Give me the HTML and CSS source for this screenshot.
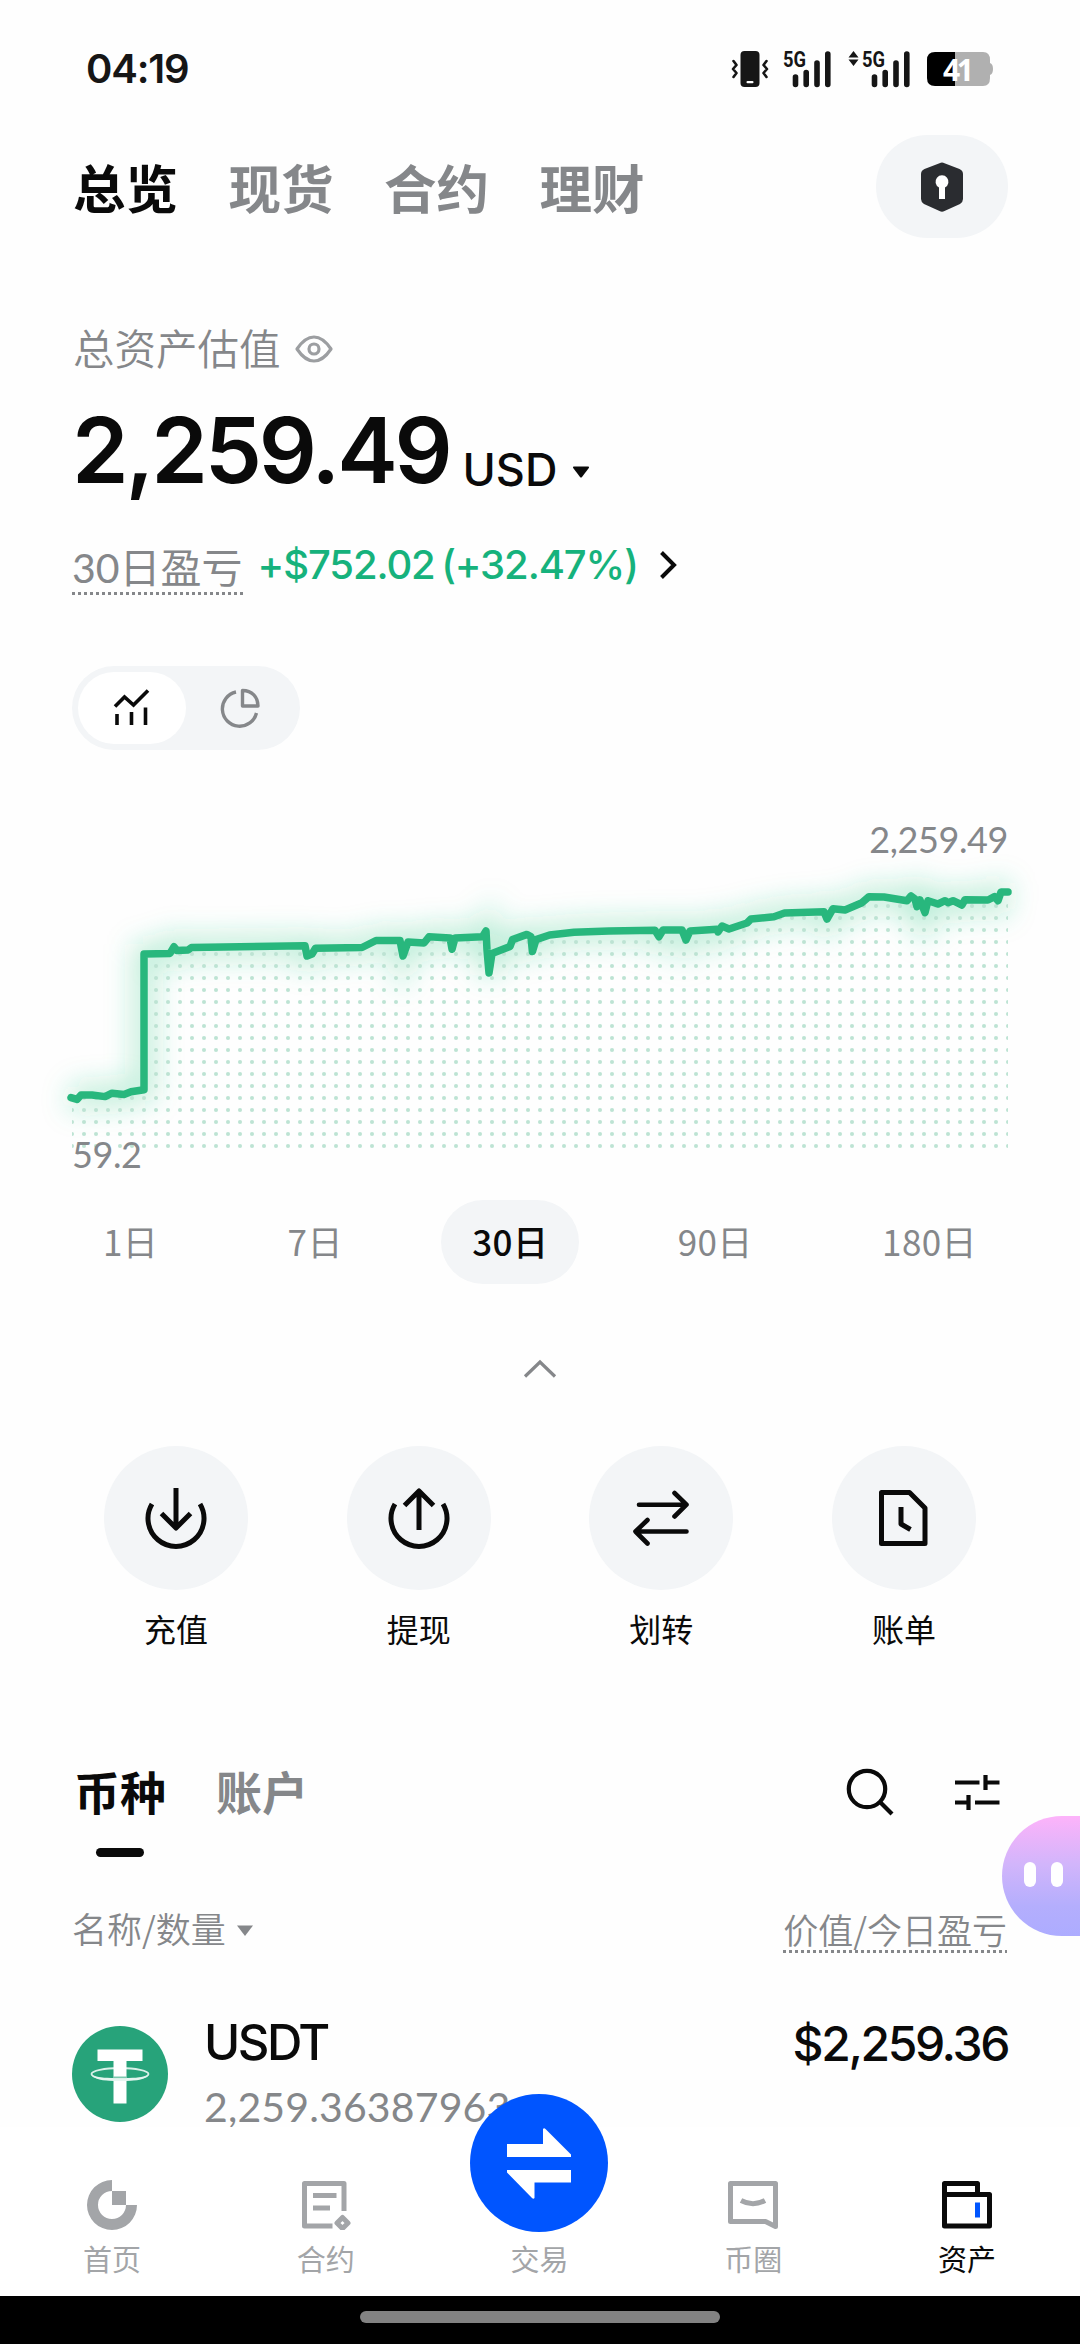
FILE: index.html
```html
<!DOCTYPE html>
<html lang="zh-CN">
<head>
<meta charset="utf-8">
<title>资产总览</title>
<link rel="stylesheet" href="styles.css">
</head>
<body>
<div class="app">
  <header class="status">
    <span class="clock">04:19</span>
    <div class="status-icons">
      <svg class="vibrate" viewBox="0 0 38 38" width="38" height="38">
        <rect x="9.500" y="1" width="19" height="36" rx="4" fill="#161616"/>
        <rect x="15.500" y="31" width="7" height="2.200" rx="1" fill="#fff"/>
        <path d="M2.500 11l3 4-3.500 4 3.500 4-3 4M35.500 11l-3 4 3.500 4-3.500 4 3 4" fill="none" stroke="#161616" stroke-width="2.600" stroke-linecap="round" stroke-linejoin="round"/>
      </svg>
      <svg class="signal" viewBox="-2 -8 54 54" width="54" height="54">
        <text class="net" x="0" y="16.500" textLength="23" lengthAdjust="spacingAndGlyphs">5G</text>
        <path d="M12.500 27v7.500M23.200 22.500v12M34 13v21.500M44.800 4v30.500" stroke="#161616" stroke-width="5.600" stroke-linecap="round"/>
      </svg>
      <svg class="signal-data" viewBox="-2 -8 66 54" width="66" height="54">
        <path d="M5.500 1l5 6.500h-10zM5.500 16l5-6.500h-10z" fill="#161616"/>
        <text class="net" x="14" y="16.500" textLength="23" lengthAdjust="spacingAndGlyphs">5G</text>
        <path d="M26.500 27v7.500M37.200 22.500v12M48 13v21.500M58.800 4v30.500" stroke="#161616" stroke-width="5.600" stroke-linecap="round"/>
      </svg>
      <svg class="battery" viewBox="0 -10 67 54" width="67" height="54">
        <path d="M8 0H56q7 0 7 8v3q3 1 3 6t-3 6v3q0 8-7 8H28V0z" fill="#b0b0b0"/>
        <path d="M28 0v34H8q-8 0-8-8V8q0-8 8-8z" fill="#000"/>
        <text class="charge" x="16" y="28.500" textLength="31">41</text>
      </svg>
    </div>
  </header>

  <nav class="top-tabs">
    <span class="top-tab active">总览</span>
    <span class="top-tab">现货</span>
    <span class="top-tab">合约</span>
    <span class="top-tab">理财</span>
    <span class="safe">
      <svg viewBox="0 0 42 50" width="42" height="50">
        <path d="M18.500 1.200q2.500-1.200 5 0L38.500 7q3.500 1.600 3.500 5v25q0 3-3 5L23.500 49q-2.500 1.400-5 0L3 42q-3-2-3-5V12q0-3.400 3.500-5z" fill="#2a2c30"/>
        <path d="M24 25.500V37h-6V25.500a6.500 6.500 0 1 1 6 0z" fill="#fff"/>
      </svg>
    </span>
  </nav>

  <main class="content">
    <div class="asset-label">总资产估值
      <svg viewBox="0 0 38 28" width="38" height="28" fill="none" stroke="#9c9ea1" stroke-width="3.200">
        <path d="M2 14Q10 2 19 2t17 12q-8 12-17 12T2 14z" stroke-linejoin="round"/><circle cx="19" cy="14" r="5"/>
      </svg>
    </div>
    <div class="amount">
      <span class="amount-value">2,259.49</span><span class="amount-unit">USD</span>
      <svg viewBox="0 0 18 12" width="18" height="12"><path d="M1.500.5h15q1 .5.300 1.500L10 11q-1 1-2 0L1.200 2Q.5 1 1.500.5z" fill="#0a0a0a"/></svg>
    </div>
    <div class="pnl">
      <span class="pnl-label dotted">30日盈亏</span>
      <span class="pnl-value">+$752.02 (+32.47%)</span>
      <svg viewBox="0 0 18 30" width="18" height="30"><path d="M2.500 2.500L15 15 2.500 27.500" fill="none" stroke="#0a0a0a" stroke-width="4"/></svg>
    </div>

    <div class="toggle">
      <span class="toggle-item on">
        <svg viewBox="0 0 38 38" width="38" height="38" fill="none" stroke="#0a0a0a" stroke-width="3.600">
          <path d="M2 17.500L11.500 8l9 8L35 1.500"/><path d="M4 25v11M18.500 23v13M32.500 18.500V36"/>
        </svg>
      </span>
      <span class="toggle-item">
        <svg viewBox="0 0 40 40" width="40" height="40" fill="none" stroke="#85878a" stroke-width="3.400">
          <path d="M16 4A17.300 17.300 0 1 0 36.500 25"/><path d="M22.500 2.500V18H38C38 9 32 2.500 22.500 2.500z" stroke-linejoin="round"/>
        </svg>
      </span>
    </div>

    <svg class="chart" viewBox="0 749 1080 431" width="1080" height="431">
      <defs>
        <pattern id="dots" x="66" y="1140" width="12" height="12" patternUnits="userSpaceOnUse"><circle cx="6" cy="6" r="2.050" fill="#bde3d3"/></pattern>
        <filter id="glow" x="-10%" y="-60%" width="120%" height="220%"><feGaussianBlur stdDeviation="14"/></filter>
        <path id="line" d="M71 1097.600L77 1099.400 81 1095 92 1095 105 1096.600 112 1093.200 124 1094.500 131 1091.800 144 1089.700V954L170 953.400 174 946.800 177 950.600 188 950 191.500 947.500 305 945.800 307 956 312 954 315.500 948.200 362 947.500 376 940.500 400 940.600 403 956 408 942 424 943 429 936.800 450 937.900 452 949.200 455 937.900 482.500 936.800 486 931 487 950 489 973 492 953.400 510 946.500 512.500 939.600 527 934.400 531 936.800 532.400 951.600 536 939.600 549.600 935 574 932.300 609 931 655 930.300 659 936.700 663 930 682 930 686 940 690 931 717 929.300 718 932 722 926 729 929 747 923 751 919 774 916.700 784.500 913 824 911.700 827 919 833 908.700 845 910 862 902.700 869 896.700 884 897 907 900.700 911 896 915 899 917 906.700 920 900 925 912.700 928 900.700 938 904 945 900.700 948 902.700 953 900.700 962 905 965 899.700 988 900 994.500 896.700 998 900.700 1001 892 1008 892"/>
        <clipPath id="area"><path d="M72 1098L144 1090V954L305 946 307 956 315 948 362 947.500 400 941 403 956 408 942 482 937 489 973 492 953.400 512 940 549.600 935 574 932 682 930 729 929 784 913 862 903 884 897 1008 897V1150H72z"/></clipPath>
      </defs>
      <use href="#line" fill="none" stroke="#25c780" stroke-opacity=".34" stroke-width="20" filter="url(#glow)"/>
      <g clip-path="url(#area)"><rect x="72" y="880" width="936" height="270" fill="url(#dots)"/></g>
      <use href="#line" fill="none" stroke="#28b77d" stroke-width="7.500" stroke-linecap="round" stroke-linejoin="round"/>
      <text class="axis" x="1008" y="853" text-anchor="end">2,259.49</text>
      <text class="axis" x="72" y="1167.500">59.2</text>
    </svg>

    <div class="periods">
      <span class="period">1日</span>
      <span class="period">7日</span>
      <span class="period current">30日</span>
      <span class="period">90日</span>
      <span class="period">180日</span>
    </div>
    <div class="collapse">
      <svg viewBox="0 0 34 20" width="34" height="20"><path d="M2 17.500L17 3l15 14.500" fill="none" stroke="#85878a" stroke-width="3.200"/></svg>
    </div>

    <div class="actions">
      <div class="action">
        <span class="action-icon"><svg class="ico" viewBox="0 0 72 72"><path d="M12 22A28 28 0 1 0 60 22M36 6V45M21.500 31.500L36 46 50.500 31.500"/></svg></span>
        <span class="action-name">充值</span>
      </div>
      <div class="action">
        <span class="action-icon"><svg class="ico" viewBox="0 0 72 72"><path d="M12 22A28 28 0 1 0 60 22M36 48V9M21.500 23.500L36 9 50.500 23.500"/></svg></span>
        <span class="action-name">提现</span>
      </div>
      <div class="action">
        <span class="action-icon"><svg class="ico thin" viewBox="0 0 72 72"><path d="M14 22.700H61M49.500 11L61.500 22.700 49.500 34.500M61.500 49.500H11M22.500 38L10.500 49.500 22.500 61.500"/></svg></span>
        <span class="action-name">划转</span>
      </div>
      <div class="action">
        <span class="action-icon"><svg class="ico" viewBox="0 0 72 72"><path d="M13.500 10.500H41.500L57 26V61.500H13.500zM33 25V42L42.500 47.500"/></svg></span>
        <span class="action-name">账单</span>
      </div>
    </div>

    <div class="list-tabs">
      <span class="list-tab active">币种</span>
      <span class="list-tab">账户</span>
      <span class="tools">
        <svg viewBox="0 0 48 48" width="48" height="48" fill="none" stroke="#0a0a0a" stroke-width="4.200"><circle cx="21" cy="21" r="18.200"/><path d="M34 34L46 46"/></svg>
        <svg viewBox="0 0 46 48" width="46" height="48" fill="none" stroke="#0a0a0a" stroke-width="4.200"><path d="M1 14.500H25.500M31.500 14.500H45.500M31.500 7v15M1 34.500H14.500M14.500 27v15M21 34.500H45.500"/></svg>
      </span>
    </div>

    <div class="list-head">
      <span class="sort">名称/数量
        <svg viewBox="0 0 16 11" width="16" height="11"><path d="M0 .5h16L8 11z" fill="#85878a"/></svg>
      </span>
      <span class="dotted">价值/今日盈亏</span>
    </div>

    <div class="coin">
      <svg class="coin-logo" viewBox="0 0 96 96" width="96" height="96">
        <circle cx="48" cy="48" r="48" fill="#27a37a"/>
        <ellipse cx="48" cy="48" rx="28.500" ry="6" fill="none" stroke="#d9f0e8" stroke-width="1.800"/>
        <path d="M25.500 23.500h45V35H54.500V77.500h-13V35h-16z" fill="#fff"/>
        <path d="M19.800 49.500C24 54.500 36 55 48 55s24-.5 28.200-5.500C71 52 60 52 48 52s-23 0-28.200-2.500z" fill="#e6f5f0"/>
        <path d="M41 51.300h14" stroke="#7cc8ae" stroke-width="1.600"/>
      </svg>
      <div class="coin-info">
        <span class="coin-name">USDT</span>
        <span class="coin-qty">2,259.36387963</span>
      </div>
      <span class="coin-value">$2,259.36</span>
    </div>
  </main>

  <nav class="bottom-nav">
    <div class="nav-item">
      <svg viewBox="0 0 50 50" width="50" height="50" fill="#a3a5a8"><path d="M25 0A25 25 0 1 0 50 25H39A14 14 0 1 1 25 11z"/><path d="M25 11h14v14H25z"/></svg>
      <span>首页</span>
    </div>
    <div class="nav-item">
      <svg viewBox="0 0 50 50" width="50" height="50" fill="none" stroke="#a3a5a8" stroke-width="5"><path d="M31.500 46H3.500V3.500H43V31M12 15.500H35.500M12 28H29" stroke-linejoin="round"/><path d="M41.500 37.500l5.500 5.500-5.500 5.500L36 43z" stroke-linejoin="round"/></svg>
      <span>合约</span>
    </div>
    <div class="nav-item trade">
      <span class="fab">
        <svg viewBox="0 0 66 72" width="66" height="72" fill="#fff"><path d="M1 17H37V2q1-1.500 2.500 0L65 27.500V30H1zM65 43H1v2.500L26 71q1.500 1.500 2.500 0V55.500H65z"/></svg>
      </span>
      <span>交易</span>
    </div>
    <div class="nav-item">
      <svg viewBox="0 0 50 50" width="50" height="50" fill="none" stroke="#a3a5a8" stroke-width="5" stroke-linejoin="round"><path d="M2.500 3.500H47.500V46.500L37.500 41.500H2.500z"/><path d="M13 20.500Q25 27 37 20.500"/></svg>
      <span>币圈</span>
    </div>
    <div class="nav-item current">
      <svg viewBox="0 0 50 50" width="50" height="50" fill="none" stroke="#0a0a0a" stroke-width="5" stroke-linejoin="round"><path d="M2.500 14.500H47.500V46H2.500zM2.500 14.500V3.500H35.500V14.500"/><path d="M35.500 22.500V37.500" stroke="#0055ff"/></svg>
      <span>资产</span>
    </div>
  </nav>
  <div class="home-bar"><span></span></div>
  <div class="assistant"><i></i><i></i></div>
</div>
</body>
</html>
```
FILE: styles.css
```css
* { box-sizing: border-box; }
body { margin: 0; background: #fff; }
.app {
  position: relative;
  display: flex;
  flex-direction: column;
  width: 1080px;
  height: 2344px;
  overflow: hidden;
  background: #fefefe;
  color: #0a0a0a;
  font-family: "Noto Sans CJK SC", sans-serif;
}
svg { display: block; flex: none; }

.status { display: flex; align-items: center; justify-content: space-between; height: 126px; padding: 12px 86px 0 86px; flex: none; }
.clock { font: 600 40px/48px Inter, sans-serif; letter-spacing: -1.200px; color: #161616; }
.status-icons { display: flex; align-items: center; }
.signal { margin-left: 12px; }
.signal-data { margin-left: 11px; }
.battery { margin-left: 15px; }
.net { font: 700 22px "Roboto", sans-serif; fill: #161616; }
.charge { font: 700 30px "Noto Sans", sans-serif; fill: #fff; }

.top-tabs { display: flex; align-items: center; gap: 50.500px; height: 120px; padding: 0 72px 0 73px; flex: none; }
.top-tab { font-size: 52.500px; line-height: 80px; font-weight: 700; color: #85878a; }
.top-tab.active, .list-tab.active { color: #0a0a0a; }
.safe { display: flex; align-items: center; justify-content: center; width: 132px; height: 103px; margin-left: auto; border-radius: 52px; background: #f3f5f7; }
.safe svg { margin-top: 2px; }

.content { flex: 1; min-height: 0; }
.asset-label { display: flex; align-items: center; gap: 14px; height: 60px; margin: 71px 72px 0 73px; font-size: 41.500px; line-height: 60px; color: #85878a; font-weight: 350; }
.asset-label svg { margin-top: 3px; }
.amount { display: flex; align-items: baseline; height: 110px; margin: 18px 72px 0; line-height: 110px; font-family: Inter, sans-serif; }
.amount-value { font-size: 91px; font-weight: 600; letter-spacing: -3.200px; }
.amount-unit { position: relative; top: 3px; margin: 0 15px 0 13px; font-size: 45px; font-weight: 500; }
.amount svg { transform: translateY(-5px); }
.pnl { display: flex; align-items: center; height: 60px; margin: 32px 72px 0; }
.pnl svg { margin: -4px 0 0 21px; }
.pnl-label { font-family: Lato, "Noto Sans CJK SC", sans-serif; font-size: 41px; }
.pnl .pnl-label { height: 56px; line-height: 58px; }
.pnl-value { margin: -4px 0 0 15px; font: 500 40px/60px Inter, sans-serif; letter-spacing: -1.100px; word-spacing: -3px; color: #16b27c; white-space: pre; }
.dotted {
  color: #85878a;
  background: repeating-linear-gradient(90deg, #85878a 0 3px, transparent 3px 6px) left bottom / 100% 3px no-repeat;
}

.toggle { display: flex; width: 228px; height: 84px; margin: 69px 72px 0; padding: 6px; border-radius: 42px; background: #f3f5f7; }
.toggle-item { display: flex; flex: 1; align-items: center; justify-content: center; border-radius: 36px; }
.toggle-item.on { background: #fff; }
.chart { margin-top: -1px; }
.axis { font: 400 36px Lato, sans-serif; letter-spacing: -.4px; fill: #85878a; }

.periods { display: flex; justify-content: space-between; margin: 20px 72px 0 72px; }
.period { height: 84px; padding: 0 31px; border-radius: 42px; font-size: 35px; letter-spacing: .4px; line-height: 82px; color: #85878a; }
.period.current { color: #0a0a0a; background: #f3f5f7; font-weight: 500; }
.collapse { display: flex; justify-content: center; height: 162px; padding-top: 75px; }

.actions { display: flex; justify-content: space-between; padding: 0 104px; }
.action { display: flex; flex-direction: column; align-items: center; gap: 16px; width: 144px; }
.action-icon { display: flex; align-items: center; justify-content: center; width: 144px; height: 144px; border-radius: 50%; background: #f3f5f7; }
.ico { width: 72px; height: 72px; fill: none; stroke: #0a0a0a; stroke-width: 5; stroke-linejoin: round; }
.ico.thin { stroke-width: 4.600; stroke-linecap: round; }
.action-name { font-size: 32px; line-height: 44px; }

.list-tabs { display: flex; gap: 50px; margin-top: 110px; padding: 0 80px 0 74px; }
.list-tab { display: flex; flex-direction: column; align-items: center; height: 97px; font-size: 46px; line-height: 60px; font-weight: 700; color: #85878a; }
.list-tab.active::after { content: ""; width: 48px; height: 9px; margin-top: auto; border-radius: 5px; background: #0a0a0a; }
.tools { display: flex; gap: 60px; margin-left: auto; padding-top: 8px; }
.list-head { display: flex; justify-content: space-between; margin: 40px 73px 0 72px; font-size: 35px; font-weight: 350; }
.sort { display: flex; align-items: center; gap: 11px; height: 60px; color: #85878a; }
.sort svg { margin-top: 6px; }
.list-head .dotted { height: 56px; line-height: 64px; }

.coin { display: flex; margin: 58px 72px 0; }
.coin-logo { margin-top: 11px; }
.coin-info { display: flex; flex-direction: column; gap: 11px; margin-left: 36px; }
.coin-name { font: 500 49px/56px Inter, sans-serif; letter-spacing: -2.500px; }
.coin-qty { font: 400 41px/50px Lato, sans-serif; letter-spacing: .15px; color: #85878a; }
.coin-value { margin-left: auto; font: 500 48px/58px Inter, sans-serif; letter-spacing: -2.400px; }

.bottom-nav { display: grid; grid-template-columns: repeat(5, 1fr); position: relative; height: 169px; padding: 0 6px 0 5px; background: #fff; flex: none; }
.nav-item { display: flex; flex-direction: column; align-items: center; justify-content: flex-end; gap: 7px; padding-bottom: 17px; font-size: 29px; line-height: 42px; color: #a3a5a8; position: relative; }
.nav-item.current { color: #0a0a0a; }
.fab { position: absolute; left: 50%; top: -33px; display: flex; align-items: center; justify-content: center; width: 138px; height: 138px; transform: translateX(-50%); border-radius: 50%; background: #0055ff; }
.home-bar { display: flex; justify-content: center; height: 48px; padding-top: 15px; background: #000; flex: none; }
.home-bar span { width: 360px; height: 12px; border-radius: 6px; background: #828282; }

.assistant { position: absolute; right: 0; top: 1816px; display: flex; gap: 15px; width: 78px; height: 120px; padding: 46px 0 0 22px; border-radius: 60px 0 0 60px; background: linear-gradient(180deg, #fdb3fa 0%, #d2b5fb 40%, #b4aefd 75%, #adacff 100%); }
.assistant i { width: 12px; height: 25px; border-radius: 6px; background: #fff; }
```
